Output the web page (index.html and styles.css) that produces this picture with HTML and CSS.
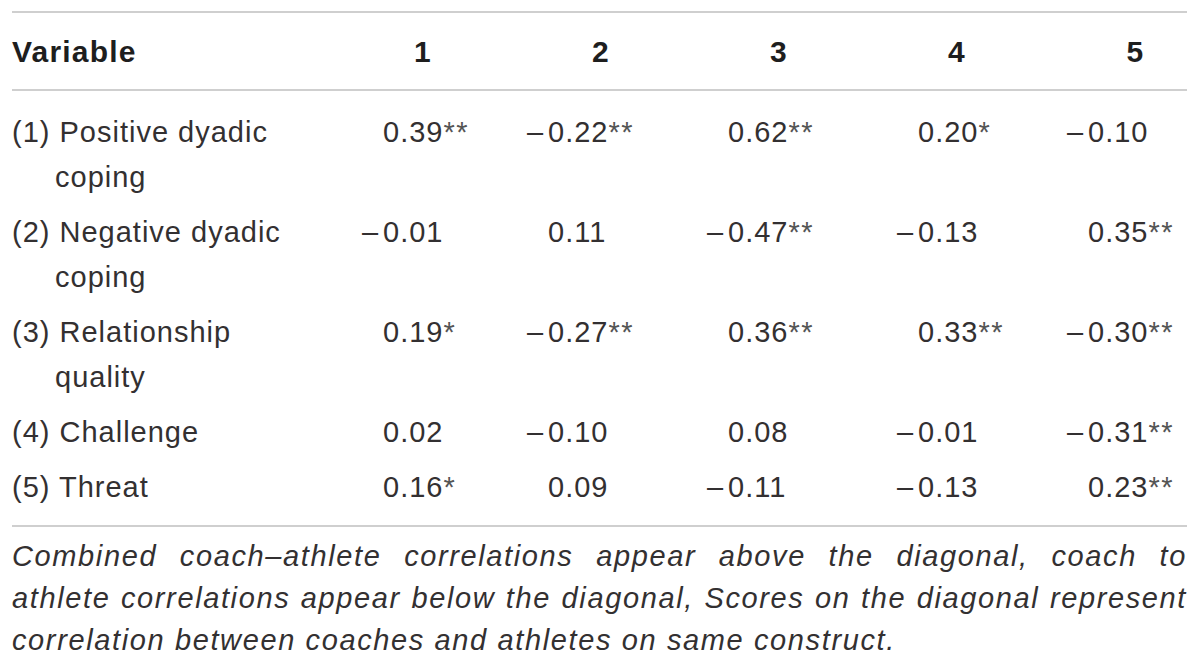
FILE: index.html
```html
<!DOCTYPE html>
<html lang="en">
<head>
  <meta charset="UTF-8">
  <meta name="viewport" content="width=device-width, initial-scale=1.0">
  <title>Correlations table</title>
  <link rel="stylesheet" href="styles.css">
</head>
<body>
  <div class="table">
    <div class="row head">
      <div class="label">Variable</div>
      <div class="num">1</div>
      <div class="num">2</div>
      <div class="num">3</div>
      <div class="num">4</div>
      <div class="num">5</div>
    </div>

    <div class="rows">
      <div class="row">
        <div class="label">(1) Positive dyadic coping</div>
        <div class="cell"><span class="sign off">–</span>0.39<span class="sig">**</span></div>
        <div class="cell"><span class="sign">–</span>0.22<span class="sig">**</span></div>
        <div class="cell"><span class="sign off">–</span>0.62<span class="sig">**</span></div>
        <div class="cell"><span class="sign off">–</span>0.20<span class="sig">*</span></div>
        <div class="cell"><span class="sign">–</span>0.10</div>
      </div>
      <div class="row">
        <div class="label">(2) Negative dyadic coping</div>
        <div class="cell"><span class="sign">–</span>0.01</div>
        <div class="cell"><span class="sign off">–</span>0.11</div>
        <div class="cell"><span class="sign">–</span>0.47<span class="sig">**</span></div>
        <div class="cell"><span class="sign">–</span>0.13</div>
        <div class="cell"><span class="sign off">–</span>0.35<span class="sig">**</span></div>
      </div>
      <div class="row">
        <div class="label">(3) Relationship quality</div>
        <div class="cell"><span class="sign off">–</span>0.19<span class="sig">*</span></div>
        <div class="cell"><span class="sign">–</span>0.27<span class="sig">**</span></div>
        <div class="cell"><span class="sign off">–</span>0.36<span class="sig">**</span></div>
        <div class="cell"><span class="sign off">–</span>0.33<span class="sig">**</span></div>
        <div class="cell"><span class="sign">–</span>0.30<span class="sig">**</span></div>
      </div>
      <div class="row">
        <div class="label">(4) Challenge</div>
        <div class="cell"><span class="sign off">–</span>0.02</div>
        <div class="cell"><span class="sign">–</span>0.10</div>
        <div class="cell"><span class="sign off">–</span>0.08</div>
        <div class="cell"><span class="sign">–</span>0.01</div>
        <div class="cell"><span class="sign">–</span>0.31<span class="sig">**</span></div>
      </div>
      <div class="row">
        <div class="label">(5) Threat</div>
        <div class="cell"><span class="sign off">–</span>0.16<span class="sig">*</span></div>
        <div class="cell"><span class="sign off">–</span>0.09</div>
        <div class="cell"><span class="sign">–</span>0.11</div>
        <div class="cell"><span class="sign">–</span>0.13</div>
        <div class="cell"><span class="sign off">–</span>0.23<span class="sig">**</span></div>
      </div>
    </div>
  </div>

  <p class="note">Combined coach–athlete correlations appear above the diagonal, coach to athlete correlations appear below the diagonal, Scores on the diagonal represent correlation between coaches and athletes on same construct.</p>
</body>
</html>
```

FILE: styles.css
```css
* {
  margin: 0;
  padding: 0;
  box-sizing: border-box;
}

body {
  font-family: "Liberation Sans", Arial, sans-serif;
  color: #333031;
  background: white;
  padding: 11px 13px 0 12px;
}

.table {
  width: 1175px;
  border-top: 2px solid #cfcfcf;
  border-bottom: 2px solid #cfcfcf;
  font-size: 29px;
  letter-spacing: 1px;
}

.row {
  display: grid;
  grid-template-columns: 322px repeat(4, 178px) 141px;
  line-height: 45px;
  padding: 5px 0;
}

.head {
  height: 78px;
  align-items: center;
  padding: 0;
  border-bottom: 2px solid #cfcfcf;
  font-size: 30px;
  font-weight: bold;
  letter-spacing: 1.2px;
  color: #1e1e1e;
}

.head .num {
  text-align: center;
}

.head .num:last-child {
  padding-left: 38px;
}

.rows {
  padding: 14px 0 10px;
}

.label {
  padding-right: 40px;
}

.rows .label {
  padding-left: 43px;
  text-indent: -43px;
}

.cell:nth-child(2) { padding-left: 28px; }
.cell:nth-child(3) { padding-left: 15px; }
.cell:nth-child(4) { padding-left: 17px; }
.cell:nth-child(5) { padding-left: 29px; }
.cell:nth-child(6) { padding-left: 21px; }

.sign {
  display: inline-block;
  width: 21px;
}

.sign.off {
  visibility: hidden;
}

.sig {
  color: #555;
  letter-spacing: 1.5px;
}

.note {
  width: 1175px;
  margin-top: 8px;
  font-size: 29px;
  font-style: italic;
  line-height: 42px;
  letter-spacing: 1.62px;
  text-align: justify;
}
```
